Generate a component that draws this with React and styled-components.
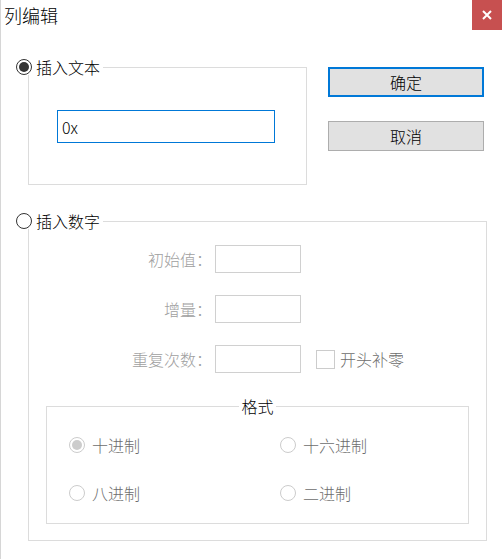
import styled, { createGlobalStyle } from "styled-components";

const GlobalStyle = createGlobalStyle`
  html, body {
    margin: 0;
    padding: 0;
    background: #ffffff;
  }
  body {
    font-family: "Noto Sans CJK SC", "Noto Sans", sans-serif;
    font-size: 16px;
    font-weight: 300;
    color: #000000;
  }
`;

const Window = styled.div`
  width: 503px;
  height: 559px;
  box-sizing: border-box;
  border-left: 1px solid #d6d6d6;
  background: #ffffff;
  overflow: hidden;
`;

const TitleBar = styled.div`
  height: 30px;
  display: flex;
  align-items: center;
  justify-content: space-between;
`;

const Title = styled.div`
  padding-left: 3px;
  font-size: 18px;
  line-height: 30px;
`;

const CloseButton = styled.div`
  width: 30px;
  height: 30px;
  margin-right: 1px;
  background: #c75050;
  display: flex;
  align-items: center;
  justify-content: center;
`;

const Body = styled.div`
  padding-left: 27px;
`;

const TopRow = styled.div`
  display: flex;
  align-items: flex-start;
  margin-top: 37px;
`;

const Group = styled.div`
  box-sizing: border-box;
  width: ${(p) => p.$w}px;
  height: ${(p) => p.$h}px;
  border: 1px solid #dcdcdc;
  display: flex;
  flex-direction: column;
  align-items: flex-start;
  margin-top: ${(p) => p.$top || 0}px;
`;

const GroupHeader = styled.label`
  display: inline-flex;
  align-items: center;
  gap: 4px;
  height: 16px;
  margin: -9px 0 0 -13px;
  padding-right: 3px;
  background: #ffffff;
  color: #000000;
  line-height: 16px;
  white-space: nowrap;
`;

const Radio = styled.span`
  box-sizing: border-box;
  flex: none;
  width: 16px;
  height: 16px;
  border-radius: 50%;
  border: 1px solid ${(p) => (p.$disabled ? "#cccccc" : "#333333")};
  display: flex;
  align-items: center;
  justify-content: center;
  &::after {
    content: "";
    width: 10px;
    height: 10px;
    border-radius: 50%;
    background: ${(p) => (p.$disabled ? "#cccccc" : "#333333")};
    display: ${(p) => (p.$checked ? "block" : "none")};
  }
`;

const TextInput = styled.div`
  box-sizing: border-box;
  width: 218px;
  height: 33px;
  margin: 35px 0 0 28px;
  border: 1px solid #0078d7;
  padding-left: 4px;
  display: flex;
  align-items: center;
  font-size: 16px;
  color: #000000;
`;

const ButtonColumn = styled.div`
  display: flex;
  flex-direction: column;
  gap: 24px;
  margin-left: 21px;
`;

const Button = styled.div`
  box-sizing: border-box;
  width: 156px;
  height: 30px;
  background: #e1e1e1;
  border: ${(p) => (p.$primary ? "2px solid #0078d7" : "1px solid #adadad")};
  display: flex;
  align-items: center;
  justify-content: center;
  font-size: 16px;
  color: #000000;
`;

const FieldRows = styled.div`
  display: flex;
  flex-direction: column;
  gap: 22px;
  margin-top: 16px;
`;

const FieldRow = styled.div`
  display: flex;
  align-items: center;
  height: 28px;
`;

const FieldLabel = styled.div`
  width: 183px;
  text-align: right;
  color: #a0a0a0;
  white-space: nowrap;
  margin-right: 3px;
`;

const SmallInput = styled.div`
  box-sizing: border-box;
  width: 86px;
  height: 28px;
  border: 1px solid #d0d0d0;
`;

const CheckWrap = styled.label`
  display: flex;
  align-items: center;
  gap: 5px;
  margin-left: 15px;
  color: #6d6d6d;
`;

const CheckBox = styled.span`
  box-sizing: border-box;
  width: 19px;
  height: 19px;
  border: 1px solid #cccccc;
`;

const FormatGroup = styled.div`
  box-sizing: border-box;
  width: 423px;
  height: 118px;
  margin: 33px 0 0 17px;
  border: 1px solid #dcdcdc;
  display: flex;
  flex-direction: column;
  align-items: center;
`;

const Legend = styled.div`
  margin-top: -11px;
  padding: 0 2px;
  height: 20px;
  line-height: 20px;
  background: #ffffff;
  color: #000000;
`;

const RadioGrid = styled.div`
  align-self: flex-start;
  display: grid;
  grid-template-columns: 211px 180px;
  row-gap: 32px;
  margin: 21px 0 0 22px;
`;

const RadioOption = styled.label`
  display: flex;
  align-items: center;
  gap: 7px;
  height: 16px;
  line-height: 16px;
  color: #6d6d6d;
  white-space: nowrap;
`;

const formats = [
  { label: "十进制", checked: true },
  { label: "十六进制" },
  { label: "八进制" },
  { label: "二进制" },
];

const fields = ["初始值：", "增量：", "重复次数："];

export default function App() {
  return (
    <>
      <GlobalStyle />
      <Window>
        <TitleBar>
          <Title>列编辑</Title>
          <CloseButton>
            <svg width="10" height="10" viewBox="0 0 10 10">
              <path d="M1 1 L9 9 M9 1 L1 9" stroke="#ffffff" strokeWidth="2" />
            </svg>
          </CloseButton>
        </TitleBar>
        <Body>
          <TopRow>
            <Group $w={279} $h={118}>
              <GroupHeader>
                <Radio $checked />
                插入文本
              </GroupHeader>
              <TextInput>0x</TextInput>
            </Group>
            <ButtonColumn>
              <Button $primary>确定</Button>
              <Button>取消</Button>
            </ButtonColumn>
          </TopRow>
          <Group $w={459} $h={320} $top={36}>
            <GroupHeader>
              <Radio />
              插入数字
            </GroupHeader>
            <FieldRows>
              {fields.map((f, i) => (
                <FieldRow key={f}>
                  <FieldLabel>{f}</FieldLabel>
                  <SmallInput />
                  {i === 2 && (
                    <CheckWrap>
                      <CheckBox />
                      开头补零
                    </CheckWrap>
                  )}
                </FieldRow>
              ))}
            </FieldRows>
            <FormatGroup>
              <Legend>格式</Legend>
              <RadioGrid>
                {formats.map((f) => (
                  <RadioOption key={f.label}>
                    <Radio $disabled $checked={f.checked} />
                    {f.label}
                  </RadioOption>
                ))}
              </RadioGrid>
            </FormatGroup>
          </Group>
        </Body>
      </Window>
    </>
  );
}
